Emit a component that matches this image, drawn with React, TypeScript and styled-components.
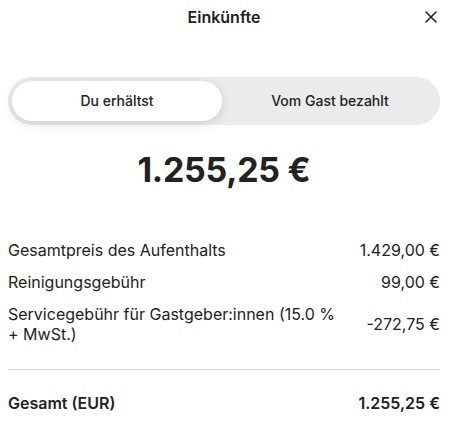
import React, { useState } from "react";
import styled, { createGlobalStyle } from "styled-components";

const GlobalStyle = createGlobalStyle`
  html, body {
    margin: 0;
    padding: 0;
    background: #ffffff;
  }
  body {
    font-family: Inter, "Noto Sans", "Liberation Sans", sans-serif;
    color: #222222;
    -webkit-font-smoothing: antialiased;
  }
`;

const Sheet = styled.div`
  width: 451px;
  padding: 0 11px 0 8px;
  box-sizing: border-box;
`;

const Header = styled.header`
  display: grid;
  grid-template-columns: 1fr auto 1fr;
  align-items: center;
  height: 34px;
`;

const Title = styled.h1`
  grid-column: 2;
  margin: 0;
  font-size: 16px;
  line-height: 20px;
  font-weight: 600;
  color: #222222;
`;

const CloseButton = styled.button`
  grid-column: 3;
  justify-self: end;
  margin-right: 1px;
  width: 16px;
  height: 16px;
  padding: 0;
  border: 0;
  background: transparent;
  display: flex;
  align-items: center;
  justify-content: center;
  cursor: pointer;
  color: #222222;
`;

const Segmented = styled.div`
  margin-top: 43px;
  display: grid;
  grid-template-columns: 1fr 1fr;
  height: 48px;
  padding: 4px;
  box-sizing: border-box;
  border-radius: 24px;
  background: #ebebeb;
`;

const Segment = styled.button<{ $active: boolean }>`
  border: 0;
  margin: 0 ${(p) => (p.$active ? "2px" : "0")} 0 0;
  border-radius: 20px;
  font-family: inherit;
  font-size: 14px;
  line-height: 18px;
  font-weight: 500;
  color: #222222;
  cursor: pointer;
  background: ${(p) => (p.$active ? "#ffffff" : "transparent")};
  box-shadow: ${(p) =>
    p.$active ? "0 3px 12px rgba(0, 0, 0, 0.12)" : "none"};
`;

const Amount = styled.div`
  margin-top: 25px;
  text-align: center;
  font-size: 34px;
  line-height: 40px;
  font-weight: 700;
  letter-spacing: -0.3px;
  color: #222222;
`;

const Lines = styled.div`
  margin-top: 50px;
  display: flex;
  flex-direction: column;
  gap: 12px;
`;

const Line = styled.div<{ $strong?: boolean }>`
  display: grid;
  grid-template-columns: minmax(0, 1fr) auto;
  align-items: center;
  column-gap: 24px;
  font-size: 16px;
  line-height: 20px;
  font-weight: ${(p) => (p.$strong ? 600 : 400)};
  color: #222222;
`;

const Label = styled.span`
  max-width: 336px;
`;

const Value = styled.span`
  text-align: right;
  white-space: nowrap;
`;

const Divider = styled.hr`
  margin: 25px 0 0;
  border: 0;
  border-top: 1px solid #dddddd;
`;

const Total = styled(Line)`
  margin-top: 23px;
`;

const rows = [
  { label: "Gesamtpreis des Aufenthalts", value: "1.429,00 €" },
  { label: "Reinigungsgebühr", value: "99,00 €" },
  {
    label: "Servicegebühr für Gastgeber:innen (15.0 % + MwSt.)",
    value: "-272,75 €",
  },
];

export default function App() {
  const [tab, setTab] = useState(0);
  return (
    <>
      <GlobalStyle />
      <Sheet>
        <Header>
          <Title>Einkünfte</Title>
          <CloseButton aria-label="Schließen">
            <svg width="12" height="12" viewBox="0 0 12 12" fill="none">
              <path
                d="M1 1 L11 11 M11 1 L1 11"
                stroke="currentColor"
                strokeWidth="1.6"
                strokeLinecap="round"
              />
            </svg>
          </CloseButton>
        </Header>

        <Segmented>
          <Segment $active={tab === 0} onClick={() => setTab(0)}>
            Du erhältst
          </Segment>
          <Segment $active={tab === 1} onClick={() => setTab(1)}>
            Vom Gast bezahlt
          </Segment>
        </Segmented>

        <Amount>1.255,25 €</Amount>

        <Lines>
          {rows.map((r) => (
            <Line key={r.label}>
              <Label>{r.label}</Label>
              <Value>{r.value}</Value>
            </Line>
          ))}
        </Lines>

        <Divider />

        <Total $strong>
          <Label>Gesamt (EUR)</Label>
          <Value>1.255,25 €</Value>
        </Total>
      </Sheet>
    </>
  );
}
